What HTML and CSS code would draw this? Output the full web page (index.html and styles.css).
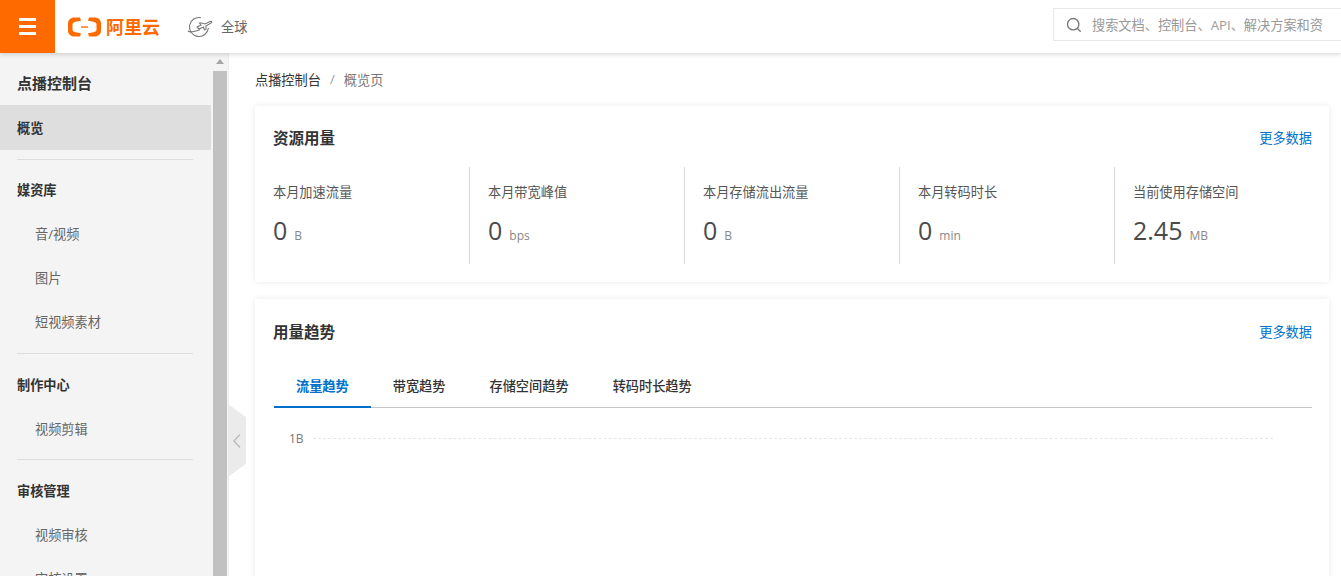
FILE: index.html
```html
<html>
<head>
  <title>点播控制台</title>
  <link rel="stylesheet" href="styles.css">
</head>
<body>
  <div class="topbar">
    <div class="menu-btn"><span></span><span></span><span></span></div>
    <div class="logo">
      <svg width="33" height="20" viewBox="0 0 33 20">
        <path d="M12 0.500H6.500C2.500 0.500 0 3 0 6.500v7C0 17 2.500 19.500 6.500 19.500H12l1-3.200-5.500-1.100C5.500 14.800 4.500 14 4.500 12.500v-5C4.500 6 5.500 5.200 7.500 4.800L13 3.700z" fill="#ff6a00"/>
        <path d="M21 0.500h5.500C30.500 0.500 33 3 33 6.500v7c0 3.500-2.500 6-6.500 6H21l-1-3.200 5.500-1.100c2-0.400 3-1.200 3-2.700v-5c0-1.500-1-2.300-3-2.700L20 3.700z" fill="#ff6a00"/>
        <path d="M13 9.300h7v1.400h-7z" fill="#ff6a00"/>
      </svg>
      <span class="logo-text">阿里云</span>
    </div>
    <div class="region">
      <svg width="26" height="22" viewBox="0 0 26 22">
        <path d="M14 1.700A9.500 9.500 0 1 0 21.400 12" fill="none" stroke="#777" stroke-width="1.100"/>
        <path d="M10 11l4-2-1.500-2h2l3.500 1 5-2.500c2-.5 2.500.5 1 1.500l-5 3v3l-1.500 1-1-3-4.500 2z" fill="none" stroke="#777" stroke-width="1.100"/>
        <path d="M1 15c2 2 9 0 12-1.500" fill="none" stroke="#777" stroke-width="1.100"/>
      </svg>
      <span>全球</span>
    </div>
    <div class="search">
      <svg width="16" height="16" viewBox="0 0 16 16">
        <circle cx="7.200" cy="7.200" r="5.700" fill="none" stroke="#777" stroke-width="1.300"/>
        <path d="M11.300 11.300l3.400 3.400" stroke="#777" stroke-width="1.300"/>
      </svg>
      <span class="search-text">搜索文档、控制台、API、解决方案和资</span>
    </div>
  </div>

  <div class="layout">
    <div class="sidebar">
      <div class="side-nav">
        <div class="nav-title">点播控制台</div>
        <div class="nav-item active">概览</div>
        <div class="divider"></div>
        <div class="nav-group">媒资库</div>
        <div class="nav-link">音/视频</div>
        <div class="nav-link">图片</div>
        <div class="nav-link">短视频素材</div>
        <div class="divider"></div>
        <div class="nav-group low">制作中心</div>
        <div class="nav-link low">视频剪辑</div>
        <div class="divider"></div>
        <div class="nav-group low">审核管理</div>
        <div class="nav-link low">视频审核</div>
        <div class="nav-link low">审核设置</div>
      </div>
      <div class="scrollbar">
        <div class="scroll-up"></div>
        <div class="scroll-thumb"></div>
      </div>
    </div>

    <div class="collapse">
      <svg width="10" height="16" viewBox="0 0 10 16">
        <path d="M8 1.500L2 8l6 6.500" fill="none" stroke="#bdbdbd" stroke-width="1.500"/>
      </svg>
    </div>

    <div class="main">
      <div class="crumbs">
        <span class="crumb-root">点播控制台</span>
        <span class="crumb-sep">/</span>
        <span class="crumb-page">概览页</span>
      </div>

      <div class="card usage">
        <div class="card-head">
          <div class="card-title">资源用量</div>
          <a class="more">更多数据</a>
        </div>
        <div class="stats">
          <div class="stat">
            <div class="stat-label">本月加速流量</div>
            <div class="stat-value">0<span class="unit">B</span></div>
          </div>
          <div class="stat">
            <div class="stat-label">本月带宽峰值</div>
            <div class="stat-value">0<span class="unit">bps</span></div>
          </div>
          <div class="stat">
            <div class="stat-label">本月存储流出流量</div>
            <div class="stat-value">0<span class="unit">B</span></div>
          </div>
          <div class="stat">
            <div class="stat-label">本月转码时长</div>
            <div class="stat-value">0<span class="unit">min</span></div>
          </div>
          <div class="stat">
            <div class="stat-label">当前使用存储空间</div>
            <div class="stat-value">2.45<span class="unit">MB</span></div>
          </div>
        </div>
      </div>

      <div class="card trend">
        <div class="card-head">
          <div class="card-title">用量趋势</div>
          <a class="more">更多数据</a>
        </div>
        <div class="tabs">
          <div class="tab current">流量趋势</div>
          <div class="tab">带宽趋势</div>
          <div class="tab">存储空间趋势</div>
          <div class="tab">转码时长趋势</div>
        </div>
        <div class="chart">
          <span class="axis-label">1B</span>
          <div class="grid-line"></div>
        </div>
      </div>
    </div>
  </div>
</body>
</html>
```

FILE: styles.css
```css
html,
body {
  height: 100%;
  margin: 0;
  overflow: hidden;
}

body {
  background-color: #fff;
  font-family: "Open Sans", "Noto Sans CJK SC", sans-serif;
  font-size: 13.2px;
  color: #333;
}

.topbar {
  display: flex;
  align-items: center;
  height: 53px;
  background-color: #fff;
  box-shadow: 0 1px 5px rgba(0, 0, 0, .18);
  position: relative;
  z-index: 2;
}

.menu-btn {
  display: flex;
  flex-direction: column;
  justify-content: center;
  gap: 4px;
  width: 55px;
  height: 53px;
  padding: 0 19px;
  box-sizing: border-box;
  background-color: #ff6a00;
}

.menu-btn span {
  display: block;
  height: 3px;
  background-color: #fff;
}

.logo {
  display: flex;
  align-items: center;
  gap: 5px;
  margin-left: 13px;
  width: 119px;
}

.logo-text {
  font-size: 18px;
  font-weight: 700;
  line-height: 24px;
  color: #ff6a00;
}

.region {
  display: flex;
  align-items: center;
  gap: 8px;
  color: #666;
}

.search {
  display: flex;
  align-items: center;
  gap: 10px;
  width: 288px;
  height: 33px;
  margin-left: auto;
  padding-left: 12px;
  box-sizing: border-box;
  border: 1px solid #e8e8e8;
  border-right: 0;
  overflow: hidden;
  white-space: nowrap;
  margin-top: -4px;
  color: #999;
}

.layout {
  display: flex;
  height: 523px;
  position: relative;
}

.sidebar {
  display: flex;
  flex: none;
  width: 229px;
  height: 100%;
  background-color: #f4f4f4;
  overflow: hidden;
  border-right: 1px solid #eee;
  box-sizing: border-box;
}

.side-nav {
  flex: none;
  width: 211px;
  margin-right: 2px;
}

.nav-title {
  height: 52px;
  padding-left: 17px;
  line-height: 60px;
  font-size: 15px;
  font-weight: 700;
  color: #333;
}

.nav-item {
  height: 45px;
  padding-left: 17px;
  line-height: 46px;
  font-weight: 700;
}

.nav-item.active {
  background-color: #dedede;
}

.divider {
  height: 1px;
  margin: 9px 18px 0 17px;
  background-color: #ddd;
}

.nav-group {
  height: 44px;
  margin-top: 8px;
  padding-left: 17px;
  line-height: 44px;
  font-weight: 700;
}

.nav-link {
  height: 44px;
  padding-left: 35px;
  line-height: 44px;
  color: #666;
}

.nav-group.low,
.nav-link.low {
  line-height: 46px;
}

.scrollbar {
  flex: none;
  width: 14px;
}

.scroll-up {
  height: 18px;
  position: relative;
}

.scroll-up::before {
  content: "";
  position: absolute;
  left: 3px;
  top: 6px;
  border: 4px solid transparent;
  border-top: 0;
  border-bottom: 5px solid #a6a6a6;
}

.scroll-thumb {
  height: 510px;
  background-color: #c1c1c1;
}

.collapse {
  position: absolute;
  left: 228px;
  top: 351px;
  display: flex;
  align-items: center;
  justify-content: center;
  width: 18px;
  height: 73px;
  background-color: #ebebeb;
  clip-path: polygon(0 0, 100% 18%, 100% 82%, 0 100%);
  padding-right: 1px;
  box-sizing: border-box;
}

.main {
  flex: 1;
  min-width: 0;
  padding: 0 12px 0 26px;
}

.crumbs {
  display: flex;
  align-items: center;
  height: 53px;
  padding-bottom: 1px;
  box-sizing: border-box;
  color: #333;
}

.crumb-sep {
  margin: 0 9px;
  color: #999;
}

.crumb-page {
  color: #777;
}

.card {
  padding: 0 17px 0 18px;
  background-color: #fff;
  box-shadow: 0 0 6px rgba(0, 0, 0, .09);
}

.usage {
  height: 176px;
  margin-bottom: 17px;
}

.trend {
  height: 300px;
}

.card-head {
  display: flex;
  align-items: center;
  justify-content: space-between;
  height: 61px;
  padding-top: 3px;
  box-sizing: border-box;
}

.usage .card-head {
  padding-top: 1px;
}

.card-title {
  font-size: 15.5px;
  font-weight: 700;
}

.more {
  color: #0070cc;
}

.stats {
  display: flex;
}

.stat {
  flex: none;
  width: 215px;
  height: 97px;
  box-sizing: border-box;
  border-right: 1px solid #d8d8d8;
}

.stat:first-child {
  width: 197px;
}

.stat + .stat {
  padding-left: 18px;
}

.stat:last-child {
  border-right: 0;
}

.stat-label {
  padding-top: 15px;
  line-height: 20px;
  color: #555;
}

.stat-value {
  margin-top: 10px;
  font-size: 25px;
  line-height: 36px;
  color: #4a4a4a;
}

.unit {
  margin-left: 7px;
  font-size: 12px;
  color: #888;
}

.tabs {
  display: flex;
  height: 45px;
  margin-top: 3px;
  margin-left: 1px;
  border-bottom: 1px solid #c4c4c4;
  box-sizing: border-box;
}

.tab {
  padding: 0 22px;
  line-height: 46px;
  height: 45px;
  box-sizing: border-box;
  color: #333;
  font-weight: 500;
}

.tab.current {
  color: #0070cc;
  font-weight: 700;
  border-bottom: 2px solid #0070cc;
}

.chart {
  display: flex;
  align-items: center;
  gap: 9px;
  height: 20px;
  margin-top: 20px;
  padding-left: 16px;
  padding-right: 39px;
}

.axis-label {
  color: #777;
  font-size: 12px;
}

.grid-line {
  flex: 1;
  border-top: 1px dashed #e6e6e6;
}
```
